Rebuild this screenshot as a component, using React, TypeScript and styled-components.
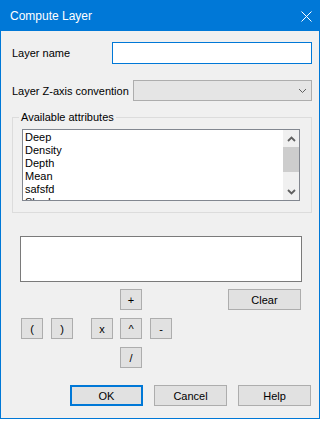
import styled, { createGlobalStyle } from "styled-components";

const GlobalStyle = createGlobalStyle`
  html, body {
    margin: 0;
    padding: 0;
    background: #ffffff;
  }
  body {
    font-family: "Liberation Sans", Arial, sans-serif;
    font-size: 11px;
    color: #000000;
  }
  * {
    box-sizing: border-box;
  }
`;

const Window = styled.div`
  width: 320px;
  height: 419px;
  border: 1px solid #0078d7;
  background: #f0f0f0;
  display: flex;
  flex-direction: column;
`;

const TitleBar = styled.div`
  height: 30px;
  flex: none;
  background: #0078d7;
  color: #ffffff;
  display: flex;
  align-items: center;
  justify-content: space-between;
  padding: 0 7px 0 9px;
  font-size: 12px;
`;

const Body = styled.div`
  padding: 11px 7px 0 11px;
  display: flex;
  flex-direction: column;
`;

const FieldRow = styled.div<{ $h: number; $top?: number }>`
  display: flex;
  align-items: center;
  height: ${(p) => p.$h}px;
  margin-top: ${(p) => p.$top ?? 0}px;
`;

const Label = styled.span`
  white-space: nowrap;
`;

const TextInput = styled.input`
  margin-left: auto;
  width: 200px;
  height: 22px;
  border: 1px solid #0078d7;
  background: #ffffff;
  outline: none;
  padding: 0 3px;
  font: inherit;
`;

const Select = styled.div`
  margin-left: auto;
  width: 179px;
  height: 21px;
  border: 1px solid #adadad;
  background: #e5e5e5;
  display: flex;
  align-items: center;
  justify-content: flex-end;
  padding-right: 4px;
`;

const GroupBox = styled.fieldset`
  margin: 9px 0 0 0;
  width: 300px;
  border: 1px solid #dcdcdc;
  padding: 5px 11px 11px 9px;
  min-inline-size: 0;
`;

const Legend = styled.legend`
  margin-left: -3px;
  padding: 0 2px;
  line-height: 14px;
`;

const ListBox = styled.div`
  width: 100%;
  height: 72px;
  border: 1px solid #828790;
  background: #ffffff;
  display: flex;
`;

const ListItems = styled.div`
  flex: 1;
  overflow: hidden;
  padding: 1px 0 0 2px;
`;

const ListItem = styled.div`
  line-height: 13px;
  height: 13px;
  white-space: nowrap;
`;

const ScrollBar = styled.div`
  width: 16px;
  flex: none;
  background: #f0f0f0;
  display: flex;
  flex-direction: column;
`;

const ScrollArrow = styled.div`
  height: 17px;
  flex: none;
  display: flex;
  align-items: center;
  justify-content: center;
`;

const ScrollTrack = styled.div`
  flex: 1;
`;

const ScrollThumb = styled.div`
  height: 25px;
  background: #cdcdcd;
`;

const ExpressionBox = styled.textarea`
  margin: 23px 0 0 8px;
  width: 282px;
  height: 46px;
  border: 1px solid #7a7a7a;
  background: #ffffff;
  resize: none;
  outline: none;
  font: inherit;
`;

const OpGrid = styled.div`
  margin: 7px 0 0 9px;
  display: grid;
  grid-template-columns: 30px 40px 29px 30px 78px 73px;
  grid-template-rows: 21px 21px 21px;
  row-gap: 8px;
`;

const Button = styled.button<{ $col?: number; $row?: number; $w?: number; $default?: boolean }>`
  grid-column: ${(p) => p.$col ?? "auto"};
  grid-row: ${(p) => p.$row ?? "auto"};
  width: ${(p) => p.$w ?? 73}px;
  height: 21px;
  padding: 0;
  background: #e1e1e1;
  border: ${(p) => (p.$default ? "2px solid #0078d7" : "1px solid #adadad")};
  font: inherit;
  color: #000000;
  display: flex;
  align-items: center;
  justify-content: center;
`;

const ButtonBar = styled.div`
  margin: 17px 1px 0 0;
  display: flex;
  justify-content: flex-end;
  gap: 11px;
`;

const attributes = ["Deep", "Density", "Depth", "Mean", "safsfd", "Shade"];

const ops = [
  { t: "+", col: 4, row: 1 },
  { t: "(", col: 1, row: 2 },
  { t: ")", col: 2, row: 2 },
  { t: "x", col: 3, row: 2 },
  { t: "^", col: 4, row: 2 },
  { t: "-", col: 5, row: 2 },
  { t: "/", col: 4, row: 3 },
];

const Chevron = ({ up, bold }: { up?: boolean; bold?: boolean }) => (
  <svg width="9" height="6" viewBox="0 0 9 6">
    <polyline
      points={up ? "1,5 4.5,1.5 8,5" : "1,1 4.5,4.5 8,1"}
      fill="none"
      stroke="#606060"
      strokeWidth={bold ? 1.8 : 1}
    />
  </svg>
);

export default function App() {
  return (
    <>
      <GlobalStyle />
      <Window>
        <TitleBar>
          <span>Compute Layer</span>
          <svg width="11" height="11" viewBox="0 0 11 11">
            <path d="M0.5 0.5 L10.5 10.5 M10.5 0.5 L0.5 10.5" stroke="#ffffff" strokeWidth="1" />
          </svg>
        </TitleBar>
        <Body>
          <FieldRow $h={22}>
            <Label>Layer name</Label>
            <TextInput />
          </FieldRow>
          <FieldRow $h={21} $top={16}>
            <Label>Layer Z-axis convention</Label>
            <Select>
              <Chevron />
            </Select>
          </FieldRow>
          <GroupBox>
            <Legend>Available attributes</Legend>
            <ListBox>
              <ListItems>
                {attributes.map((a) => (
                  <ListItem key={a}>{a}</ListItem>
                ))}
              </ListItems>
              <ScrollBar>
                <ScrollArrow>
                  <Chevron up bold />
                </ScrollArrow>
                <ScrollThumb />
                <ScrollTrack />
                <ScrollArrow>
                  <Chevron bold />
                </ScrollArrow>
              </ScrollBar>
            </ListBox>
          </GroupBox>
          <ExpressionBox />
          <OpGrid>
            {ops.map((o) => (
              <Button key={o.t} $col={o.col} $row={o.row} $w={22}>
                {o.t}
              </Button>
            ))}
            <Button $col={6} $row={1}>
              Clear
            </Button>
          </OpGrid>
          <ButtonBar>
            <Button $default>OK</Button>
            <Button>Cancel</Button>
            <Button>Help</Button>
          </ButtonBar>
        </Body>
      </Window>
    </>
  );
}
